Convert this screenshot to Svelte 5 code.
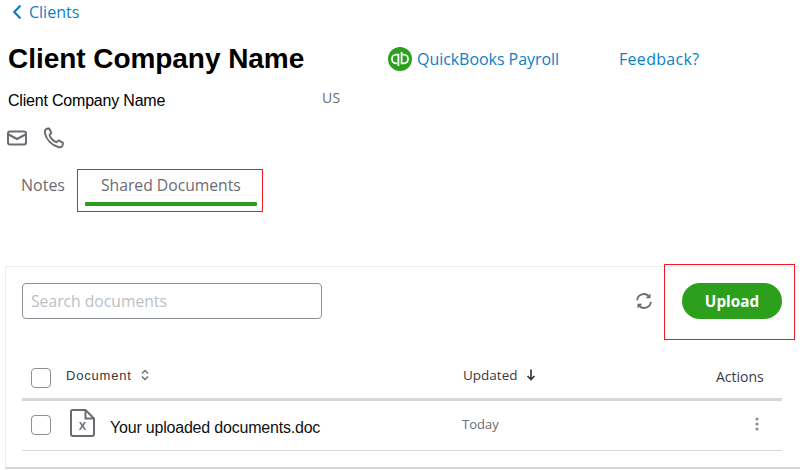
<script>
  const rowDoc = 'Your uploaded documents.doc';
</script>

<div class="page">
  <a class="back" href="#clients">
    <svg width="10" height="16" viewBox="0 0 10 16"><path d="M8.500 1.500 2.300 8l6.200 6.500" fill="none" stroke="#0d7fc4" stroke-width="2.200"/></svg>
    <span>Clients</span>
  </a>

  <div class="title-row">
    <h1>Client Company Name</h1>
    <a class="qb" href="#qb">
      <svg width="24" height="24" viewBox="0 0 24 24">
        <circle cx="12" cy="12" r="12" fill="#2ca01c"/>
        <path d="M10.400 19V7.700H8.200a4.300 4.300 0 0 0 0 8.600h1M13.600 5V16.300h2.200a4.300 4.300 0 0 0 0-8.600h-1" fill="none" stroke="#fff" stroke-width="1.800"/>
      </svg>
      <span>QuickBooks Payroll</span>
    </a>
    <a class="feedback" href="#feedback">Feedback?</a>
  </div>

  <div class="info-row">
    <span class="name">Client Company Name</span>
    <span class="country">US</span>
  </div>

  <div class="contact">
    <svg width="20" height="16" viewBox="0 0 20 16"><rect x="1" y="1.500" width="18" height="13" rx="2" fill="none" stroke="#6b6c72" stroke-width="2"/><path d="M1.500 4.500 10 9l8.500-4.500" fill="none" stroke="#6b6c72" stroke-width="2"/></svg>
    <svg width="22" height="22" viewBox="0 0 22 22"><path d="M3.500 1.800 6.300 1.500 8.300 6 6.500 7.800C7.300 10.800 10 13.800 13.500 15.300L15.600 13.400 20 15.800 19.600 18.200C19.200 20 17 20.600 15.300 20 8.500 18 3.500 12.500 2 6.500 1.600 4.500 2 2.600 3.500 1.800Z" fill="none" stroke="#6b6c72" stroke-width="1.900" stroke-linejoin="round"/></svg>
  </div>

  <div class="tabs">
    <span class="tab notes">Notes</span>
    <span class="tab shared">Shared Documents</span>
    <span class="mark mark-tab"></span>
  </div>

  <section class="card">
    <div class="toolbar">
      <input class="search" placeholder="Search documents" />
      <svg class="refresh" width="18" height="18" viewBox="0 0 18 18"><g fill="none" stroke="#6b6c72" stroke-width="1.800"><path d="M2.200 8.200A6.500 6.500 0 0 1 14 4.800"/><path d="M15.800 9.800A6.500 6.500 0 0 1 4 13.200"/></g><path d="M15.500 1.500v4.800h-4.800zM2.500 16.500v-4.800h4.800z" fill="#6b6c72"/></svg>
      <button class="upload">Upload</button>
      <span class="mark mark-upload"></span>
    </div>

    <div class="thead">
      <span class="check"></span>
      <span class="th doc">Document
        <svg width="10" height="14" viewBox="0 0 10 14"><path d="M2 5.500 5 2.500l3 3M2 8.500l3 3 3-3" fill="none" stroke="#6b6c72" stroke-width="1.400"/></svg>
      </span>
      <span class="th updated">Updated
        <svg width="10" height="12" viewBox="0 0 10 12"><path d="M5 .5v10M1.500 7 5 10.500 8.500 7" fill="none" stroke="#393a3d" stroke-width="1.700"/></svg>
      </span>
      <span class="th actions">Actions</span>
    </div>

    <div class="trow">
      <span class="check"></span>
      <svg class="file" width="25" height="28" viewBox="0 0 25 28"><path d="M2.500 1h13L24 9.500V25a2 2 0 0 1-2 2H3a2 2 0 0 1-2-2V2.500A1.500 1.500 0 0 1 2.500 1Z" fill="none" stroke="#6b6c72" stroke-width="2"/><path d="M15.500 1v8.500H24" fill="none" stroke="#6b6c72" stroke-width="2"/><text x="12.500" y="21" text-anchor="middle" class="x">X</text></svg>
      <span class="filename">{rowDoc}</span>
      <span class="today">Today</span>
      <svg class="kebab" width="4" height="14" viewBox="0 0 4 14"><circle cx="2" cy="2" r="1.600"/><circle cx="2" cy="7" r="1.600"/><circle cx="2" cy="12" r="1.600"/></svg>
    </div>
  </section>
</div>

<style>
  :global(body) { margin: 0; background: #fff; }
  .page { width: 802px; height: 470px; overflow: hidden; font-family: "Open Sans", sans-serif; color: #393a3d; box-sizing: border-box; }
  a { text-decoration: none; color: #0d7fc4; }

  .back { display: flex; align-items: center; gap: 7px; height: 24px; padding-left: 12px; font-size: 16px; }

  .title-row { display: flex; align-items: center; height: 40px; margin-top: 15px; padding-left: 8px; }
  h1 { margin: 0; width: 380px; font: bold 28px "Liberation Sans", sans-serif; letter-spacing: -.05px; color: #000; white-space: nowrap; }
  .qb { display: flex; align-items: center; gap: 5px; width: 231px; font-size: 16px; letter-spacing: -.05px; }
  .feedback { font-size: 16px; letter-spacing: .3px; }

  .info-row { display: flex; height: 24px; margin-top: 10px; padding-left: 8px; }
  .name { width: 314px; font: 16px/24px "Liberation Sans", sans-serif; letter-spacing: -.2px; color: #000; }
  .country { font-size: 14px; line-height: 17px; letter-spacing: .4px; color: #6b6c72; }

  .contact { display: flex; align-items: center; gap: 16px; height: 24px; margin-top: 13px; padding-left: 7px; }

  .tabs { position: relative; display: flex; height: 42px; margin-top: 19px; padding-left: 21px; font-size: 16px; color: #6b6c72; }
  .tab { line-height: 33px; }
  .notes { width: 80px; }
  .shared { position: relative; color: #6b6c72; font-size: 15.700px; }
  .shared::after { content: ""; position: absolute; left: -16px; width: 172px; top: 33px; height: 4px; border-radius: 1px; background: #2ca01c; }
  .mark { position: absolute; box-sizing: border-box; border: 1px solid #ed1c24; pointer-events: none; }
  .mark-tab { left: 77px; top: 0; width: 186px; height: 43px; border-color: #ed1c24; }

  .card { position: relative; box-sizing: border-box; width: 795px; height: 203px; margin: 55px 0 0 5px; padding: 0 16px; border: 1px solid #eceef1; border-bottom: 2px solid #d4d7dc; border-right: 0; }
  .toolbar { position: relative; display: flex; align-items: center; height: 36px; margin-top: 16px; }
  .search { box-sizing: border-box; width: 300px; height: 36px; padding: 0 8px; border: 1px solid #8d9096; border-radius: 4px; font: 15.700px "Open Sans", sans-serif; outline: none; }
  .search::placeholder { color: #babec5; opacity: 1; }
  .refresh { margin-left: 313px; }
  .upload { width: 100px; height: 36px; margin-left: 29px; border: 0; border-radius: 18px; background: #2ca01c; color: #fff; font: bold 15.300px "Open Sans", sans-serif; padding: 0; }
  .mark-upload { left: 642px; top: -19px; width: 131px; height: 76px; border-color: #ed1c24; }

  .thead, .trow { position: relative; display: flex; align-items: center; width: 760px; box-sizing: border-box; }
  .thead { height: 46px; margin-top: 36px; border-bottom: 3px solid #d4d7dc; padding-bottom: 0; }
  .trow { height: 50px; border-bottom: 1px solid #d4d7dc; }
  .check { box-sizing: border-box; flex: none; width: 20px; height: 20px; margin-left: 9px; border: 1px solid #8d9096; border-radius: 4px; background: #fff; }
  .thead .check { margin-top: 3px; }
  .trow .check { margin-top: -1px; }
  .th { display: flex; align-items: center; gap: 6px; font-size: 13.500px; color: #393a3d; }
  .th.doc { font: 13px "Liberation Sans", sans-serif; letter-spacing: .8px; gap: 8px; width: 396px; margin-left: 15px; margin-top: -3px; color: #393a3d; }
  .th.updated { width: 160px; font-weight: 400; margin: -3px 0 0 1px; gap: 8px; }
  .th.actions { font-size: 14px; margin: -1px 0 0 93px; }
  .file { flex: none; margin: -5px 0 0 19px; }
  .x { font: bold 11px "Liberation Sans", sans-serif; fill: #6b6c72; }
  .filename { width: 352px; margin: 4px 0 0 15px; font: 16px "Liberation Sans", sans-serif; color: #111; white-space: nowrap; letter-spacing: -.2px; }
  .today { width: 293px; margin-top: -3px; font-size: 13px; letter-spacing: .05px; color: #6b6c72; }
  .kebab { fill: #8d9096; margin-top: -3px; }
</style>
